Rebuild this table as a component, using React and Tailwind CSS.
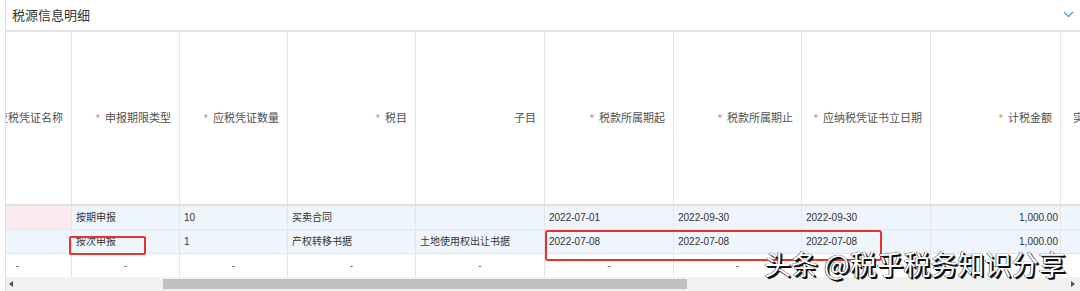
import React from "react";

const cols = [
  { w: "w-[108px]", label: "应税凭证名称", star: true, align: "right" },
  { w: "w-[108px]", label: "申报期限类型", star: true, align: "right" },
  { w: "w-[108px]", label: "应税凭证数量", star: true, align: "right" },
  { w: "w-[128px]", label: "税目", star: true, align: "right" },
  { w: "w-[129px]", label: "子目", star: false, align: "right" },
  { w: "w-[129px]", label: "税款所属期起", star: true, align: "right" },
  { w: "w-[128px]", label: "税款所属期止", star: true, align: "right" },
  { w: "w-[129px]", label: "应纳税凭证书立日期", star: true, align: "right" },
  { w: "w-[130px]", label: "计税金额", star: true, align: "right" },
  { w: "w-[160px]", label: "实际申报金额", star: false, align: "left" },
];

const rows = [
  ["", "按期申报", "10", "买卖合同", "", "2022-07-01", "2022-09-30", "2022-09-30", "1,000.00", ""],
  ["", "按次申报", "1", "产权转移书据", "土地使用权出让书据", "2022-07-08", "2022-07-08", "2022-07-08", "1,000.00", ""],
];

function HeaderCell({ c }) {
  return (
    <div
      className={`${c.w} shrink-0 h-full border-r border-[#e6e6e6] flex items-center ${
        c.align === "right" ? "justify-end pr-[8px]" : "justify-start pl-[12px]"
      } text-[11px] text-[#505050] whitespace-nowrap`}
    >
      {c.star && <span className="text-[#f2803a] mr-[5px] text-[11px]">*</span>}
      <span>{c.label}</span>
    </div>
  );
}

export default function App() {
  return (
    <div
      className="relative w-[1080px] h-[291px] bg-white overflow-hidden flex pl-[5px]"
      style={{ fontFamily: '"Liberation Sans", "Noto Sans CJK SC", sans-serif' }}
    >
      <div className="flex-1 min-w-0 flex flex-col border-l border-[#dedede]">
        {/* title bar */}
        <div className="h-[32px] shrink-0 flex items-center justify-between pl-[6px] pr-[6px] border-b-2 border-[#e4e4e4]">
          <span className="text-[13px] text-[#333] leading-none">税源信息明细</span>
          <svg width="11" height="7" viewBox="0 0 11 7" className="mb-[1px]">
            <path d="M1 1l4.5 4.5L10 1" fill="none" stroke="#5b9bd5" strokeWidth="1.4" />
          </svg>
        </div>

        {/* table */}
        <div className="flex-1 min-h-0 overflow-hidden">
          <div className="-ml-[42px] w-max flex flex-col">
            {/* header */}
            <div className="h-[174px] flex border-b-2 border-[#e0e0e0]">
              {cols.map((c, i) => (
                <HeaderCell key={i} c={c} />
              ))}
            </div>
            {/* body rows */}
            {rows.map((r, ri) => (
              <div key={ri} className="h-[24px] flex border-b border-[#e6e6e6] bg-[#eef5fd]">
                {cols.map((c, ci) => (
                  <div
                    key={ci}
                    className={`${c.w} shrink-0 h-full border-r border-[#e6e6e6] flex items-center text-[10px] text-[#333] whitespace-nowrap ${
                      ci === 8 ? "justify-end pr-[2px]" : "pl-[4px]"
                    } ${ri === 0 && ci === 0 ? "bg-[#fdeaf0]" : ""}`}
                  >
                    {r[ci]}
                  </div>
                ))}
              </div>
            ))}
            {/* dash row */}
            <div className="h-[23px] flex bg-white">
              {cols.map((c, ci) => (
                <div
                  key={ci}
                  className={`${c.w} shrink-0 h-full border-r border-[#e6e6e6] flex items-center justify-center text-[10px] text-[#666]`}
                >
                  -
                </div>
              ))}
            </div>
          </div>
        </div>

        {/* horizontal scrollbar */}
        <div className="h-[14px] shrink-0 bg-[#f1f1f1] flex items-center">
          <div className="w-[157px] shrink-0 flex items-center pl-[3px]">
            <svg width="4" height="6" viewBox="0 0 4 6">
              <path d="M4 0L0 3l4 3z" fill="#505050" />
            </svg>
          </div>
          <div className="w-[524px] h-[10px] bg-[#c1c1c1] shrink-0" />
          <div className="flex-1" />
          <div className="pr-[5px] flex items-center">
            <svg width="4" height="6" viewBox="0 0 4 6">
              <path d="M0 0l4 3-4 3z" fill="#505050" />
            </svg>
          </div>
        </div>
      </div>

      {/* red annotation boxes */}
      <div className="absolute left-[69px] top-[236px] w-[77px] h-[19px] border-2 border-[#e8322b] rounded-[2px]" />
      <div className="absolute left-[545px] top-[230px] w-[337px] h-[31px] border-2 border-[#e8322b] rounded-[3px]" />

      {/* watermark */}
      <div
        className="absolute left-[764px] top-[250px] text-[27px] leading-none text-white whitespace-nowrap [text-shadow:1px_1px_0_#111,2px_2px_0_#111,-0.5px_-0.5px_0_#444,0_0_1px_#000]"
        style={{ fontFamily: '"Noto Sans CJK SC", sans-serif' }}
      >
        头条 @税乎税务知识分享
      </div>
    </div>
  );
}
